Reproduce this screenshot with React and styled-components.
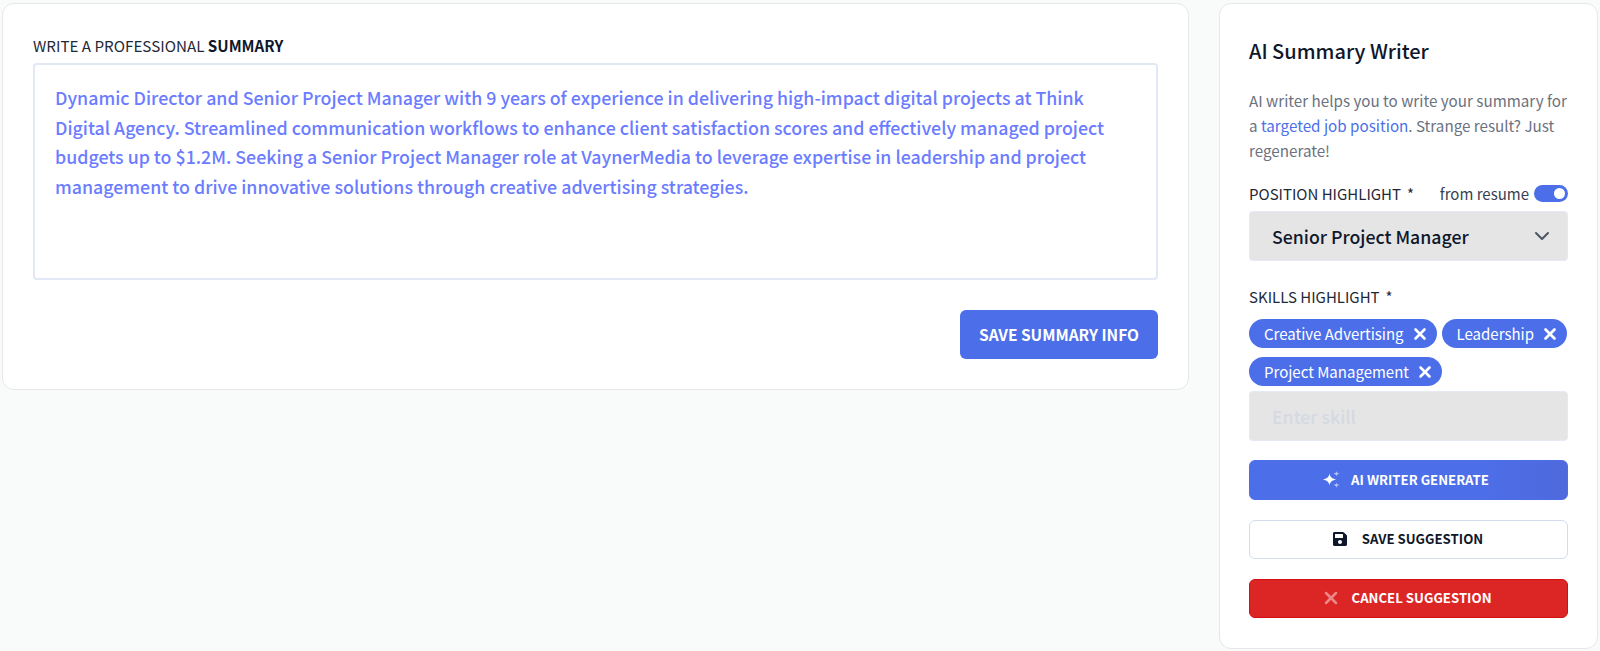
import React from 'react';
import styled, { createGlobalStyle } from 'styled-components';
import { X, ChevronDown } from 'lucide-react';
import { FaSave } from 'react-icons/fa';

const GlobalStyle = createGlobalStyle`
  html, body {
    margin: 0;
    padding: 0;
    background: #f9fafa;
    font-family: "Noto Sans CJK SC", "Noto Sans", sans-serif;
  }
  * { box-sizing: border-box; }
`;

const skills = ['Creative Advertising', 'Leadership', 'Project Management'];

const Sparkle = () => (
  <svg width="17" height="17" viewBox="0 0 17 17" fill="#fff">
    <path d="M6.5 2.5 C7.2 6 8.2 7.3 13 8.5 C8.2 9.7 7.2 11 6.5 14.5 C5.8 11 4.8 9.7 0 8.5 C4.8 7.3 5.8 6 6.5 2.5Z" />
    <path opacity="0.6" d="M13.5 0 C13.8 1.8 14.2 2.2 16.5 2.7 C14.2 3.2 13.8 3.6 13.5 5.4 C13.2 3.6 12.8 3.2 10.5 2.7 C12.8 2.2 13.2 1.8 13.5 0Z" />
    <path opacity="0.6" d="M13.5 11.6 C13.8 13.2 14.2 13.6 16.5 14.1 C14.2 14.6 13.8 15 13.5 17 C13.2 15 12.8 14.6 10.5 14.1 C12.8 13.6 13.2 13.2 13.5 11.6Z" />
  </svg>
);

const App = () => (
  <>
    <GlobalStyle />
    <Page>
      <MainCard>
        <SectionLabel>
          WRITE A PROFESSIONAL <strong>SUMMARY</strong>
        </SectionLabel>
        <SummaryBox>
          Dynamic Director and Senior Project Manager with 9 years of experience in delivering
          high-impact digital projects at Think Digital Agency. Streamlined communication workflows
          to enhance client satisfaction scores and effectively managed project budgets up to
          $1.2M. Seeking a Senior Project Manager role at VaynerMedia to leverage expertise in
          leadership and project management to drive innovative solutions through creative
          advertising strategies.
        </SummaryBox>
        <Actions>
          <SaveInfoButton>SAVE SUMMARY INFO</SaveInfoButton>
        </Actions>
      </MainCard>

      <SideCard>
        <SideTitle>AI Summary Writer</SideTitle>
        <Description>
          AI writer helps you to write your summary for a <Accent>targeted job position</Accent>.
          Strange result? Just regenerate!
        </Description>

        <FieldHead>
          <FieldLabel>POSITION HIGHLIGHT<Star>*</Star></FieldLabel>
          <ToggleWrap>
            from resume
            <Toggle />
          </ToggleWrap>
        </FieldHead>
        <SelectBox>
          Senior Project Manager
          <ChevronDown size={24} color="#4b5563" strokeWidth={2} />
        </SelectBox>

        <SkillsLabel>SKILLS HIGHLIGHT<Star>*</Star></SkillsLabel>
        <ChipList>
          {skills.map((skill) => (
            <Chip key={skill}>
              {skill}
              <X size={18} strokeWidth={3.5} />
            </Chip>
          ))}
        </ChipList>
        <SkillInput>Enter skill</SkillInput>

        <ActionButton $variant="primary" $gap={11}>
          <Sparkle />
          AI WRITER GENERATE
        </ActionButton>
        <ActionButton $variant="outline" $gap={14}>
          <FaSave size={16} color="#0f172a" />
          SAVE SUGGESTION
        </ActionButton>
        <ActionButton $variant="danger" $gap={14}>
          <FadedX><X size={20} strokeWidth={3} /></FadedX>
          CANCEL SUGGESTION
        </ActionButton>
      </SideCard>
    </Page>
  </>
);

const Page = styled.div`
  width: 1600px;
  height: 651px;
  padding: 3px 2px 2px;
  display: flex;
  align-items: flex-start;
  gap: 30px;
  overflow: hidden;
`;

const Card = styled.section`
  background: #fff;
  border: 1px solid #e5e7eb;
  border-radius: 12px;
`;

const MainCard = styled(Card)`
  width: 1187px;
  height: 387px;
  padding: 30px 30px 0 30px;
`;

const SideCard = styled(Card)`
  width: 379px;
  height: 646px;
  padding: 33px 29px 0 29px;
`;

const SectionLabel = styled.div`
  font-size: 15.2px;
  line-height: 22px;
  color: #1f2937;
  strong {
    font-weight: 700;
    color: #0f172a;
  }
`;

const SummaryBox = styled.div`
  margin-top: 7px;
  height: 217px;
  padding: 18px 20px 0 20px;
  border: 2px solid #e2e8f5;
  border-radius: 4px;
  font-size: 17.8px;
  line-height: 29.7px;
  font-weight: 500;
  color: #6b7cff;
`;

const Actions = styled.div`
  display: flex;
  justify-content: flex-end;
  margin-top: 30px;
`;

const SaveInfoButton = styled.button`
  width: 198px;
  height: 49px;
  padding: 0 0 2px;
  border: none;
  border-radius: 6px;
  background: #4c6fe9;
  color: #fff;
  font: 700 15.5px "Noto Sans CJK SC", sans-serif;
`;

const SideTitle = styled.h2`
  margin: 0;
  font-size: 20px;
  line-height: 28px;
  font-weight: 500;
  color: #0f172a;
`;

const Description = styled.p`
  margin: 23px 0 0;
  font-size: 15.2px;
  line-height: 25px;
  color: #6b7280;
`;

const Accent = styled.span`
  color: #4c6fe9;
`;

const FieldHead = styled.div`
  display: flex;
  align-items: center;
  justify-content: space-between;
  margin-top: 18px;
  height: 24px;
`;

const FieldLabel = styled.span`
  font-size: 15px;
  color: #1f2937;
`;

const Star = styled.span`
  margin-left: 6px;
`;

const ToggleWrap = styled.span`
  display: flex;
  align-items: center;
  gap: 5px;
  font-size: 15px;
  color: #374151;
`;

const Toggle = styled.span`
  position: relative;
  width: 34px;
  height: 17px;
  border-radius: 9px;
  background: #4c6fe9;
  &::after {
    content: '';
    position: absolute;
    right: 3px;
    top: 3px;
    width: 11px;
    height: 11px;
    border-radius: 50%;
    background: #fff;
  }
`;

const Field = styled.div`
  height: 50px;
  display: flex;
  align-items: center;
  justify-content: space-between;
  border: 1px solid #e5e9f5;
  border-radius: 4px;
  background: #e5e5e6;
  padding: 0 13px 0 22px;
  font-size: 17.7px;
  font-weight: 500;
`;

const SelectBox = styled(Field)`
  margin-top: 6px;
  color: #0f172a;
`;

const SkillsLabel = styled(FieldLabel)`
  display: block;
  margin-top: 24px;
  line-height: 24px;
`;

const ChipList = styled.div`
  display: flex;
  flex-wrap: wrap;
  gap: 9px 5px;
  margin-top: 10px;
`;

const Chip = styled.span`
  display: inline-flex;
  align-items: center;
  gap: 7px;
  height: 29px;
  padding: 0 8px 0 15px;
  border-radius: 15px;
  background: #4c6fe9;
  color: #fff;
  font-size: 15px;
`;

const SkillInput = styled(Field)`
  margin-top: 5px;
  color: #d5d9e2;
`;

const variants = {
  primary: `
    background: linear-gradient(90deg, #4c6fe9 70%, #5069dd);
    border: 1px solid #4c6fe9;
    color: #fff;
    height: 40px;
    margin-top: 19px;
    padding: 0 5px 2px 0;
  `,
  outline: `
    background: #fff;
    border: 1px solid #d5dced;
    color: #0f172a;
    height: 39px;
    margin-top: 20px;
    padding: 0 2px 2px 0;
  `,
  danger: `
    background: #dc2626;
    border: 1px solid #d40f0f;
    color: #fff;
    height: 39px;
    margin-top: 20px;
    padding: 0 0 2px 0;
  `,
};

const ActionButton = styled.button`
  width: 100%;
  display: flex;
  align-items: center;
  justify-content: center;
  gap: ${(p) => p.$gap}px;
  border-radius: 6px;
  font: 700 13.2px "Noto Sans CJK SC", sans-serif;
  ${(p) => variants[p.$variant]}
`;

const FadedX = styled.span`
  display: flex;
  margin: 0 -4px;
  opacity: 0.45;
`;

export default App;
